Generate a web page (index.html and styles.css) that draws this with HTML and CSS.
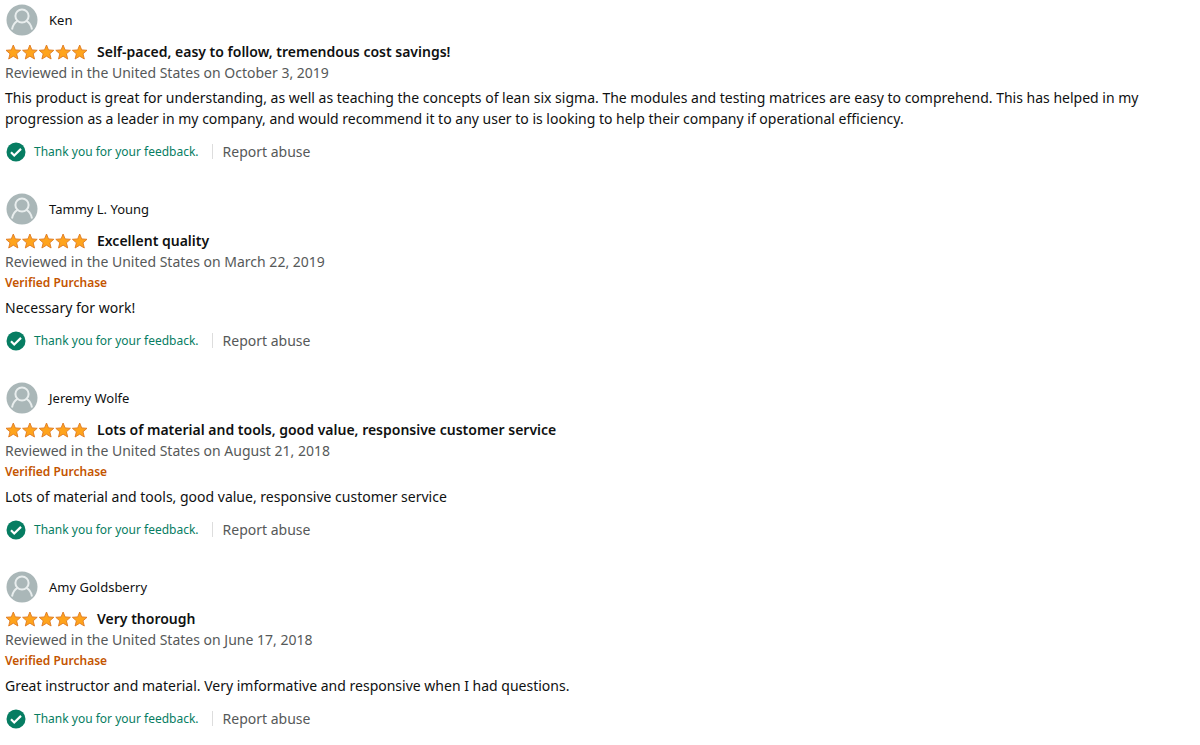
FILE: index.html
```
<!DOCTYPE html>
<html lang="en">
<head>
  <meta charset="UTF-8">
  <title>Customer Reviews</title>
  <link rel="stylesheet" href="styles.css">
</head>
<body>

  <!-- Shared icons -->
  <svg class="icon-defs" aria-hidden="true">
    <symbol id="avatar" viewBox="0 0 32 32">
      <circle cx="16" cy="16" r="15.5" fill="#aab7b8"/>
      <g fill="none" stroke="#e9eeee" stroke-width="2">
        <circle cx="16" cy="12" r="6.6"/>
        <path d="M6 25.500c.8-4.600 2.600-7.300 5.700-8.700M26 25.500c-.8-4.600-2.600-7.300-5.700-8.700"/>
      </g>
    </symbol>
    <symbol id="stars" viewBox="0 0 84 16">
      <g fill="#ffa41c" stroke="#de7921" stroke-width="0.9" stroke-linejoin="round">
        <path id="star" d="M8.300 1l2 4.900 5.300.4-4 3.500 1.300 5.200-4.600-2.800-4.600 2.800L5 9.800 1 6.300l5.300-.4z"/>
        <use href="#star" x="16.600"/>
        <use href="#star" x="33.200"/>
        <use href="#star" x="49.800"/>
        <use href="#star" x="66.400"/>
      </g>
    </symbol>
    <symbol id="check" viewBox="0 0 20 20">
      <circle cx="10" cy="10" r="9.500" fill="#067d62"/>
      <path d="M5 10.300l3.200 3.200 6.800-6.600" fill="none" stroke="#fff" stroke-width="2.200"/>
    </symbol>
  </svg>

  <div class="review">
    <div class="profile">
      <svg class="avatar" aria-hidden="true"><use href="#avatar"/></svg>
      <span class="name">Ken</span>
    </div>
    <div class="heading">
      <svg class="stars" role="img" aria-label="5 out of 5 stars"><use href="#stars"/></svg>
      <h3 class="title">Self-paced, easy to follow, tremendous cost savings!</h3>
    </div>
    <div class="date">Reviewed in the United States on October 3, 2019</div>
    <p class="text">This product is great for understanding, as well as teaching the concepts of lean six sigma. The modules and testing matrices are easy to comprehend. This has helped in my progression as a leader in my company, and would recommend it to any user to is looking to help their company if operational efficiency.</p>
    <div class="actions">
      <svg class="check" aria-hidden="true"><use href="#check"/></svg>
      <span class="thanks">Thank you for your feedback.</span>
      <a class="report" href="#">Report abuse</a>
    </div>
  </div>

  <div class="review">
    <div class="profile">
      <svg class="avatar" aria-hidden="true"><use href="#avatar"/></svg>
      <span class="name">Tammy L. Young</span>
    </div>
    <div class="heading">
      <svg class="stars" role="img" aria-label="5 out of 5 stars"><use href="#stars"/></svg>
      <h3 class="title">Excellent quality</h3>
    </div>
    <div class="date">Reviewed in the United States on March 22, 2019</div>
    <div class="verified">Verified Purchase</div>
    <p class="text">Necessary for work!</p>
    <div class="actions">
      <svg class="check" aria-hidden="true"><use href="#check"/></svg>
      <span class="thanks">Thank you for your feedback.</span>
      <a class="report" href="#">Report abuse</a>
    </div>
  </div>

  <div class="review">
    <div class="profile">
      <svg class="avatar" aria-hidden="true"><use href="#avatar"/></svg>
      <span class="name">Jeremy Wolfe</span>
    </div>
    <div class="heading">
      <svg class="stars" role="img" aria-label="5 out of 5 stars"><use href="#stars"/></svg>
      <h3 class="title">Lots of material and tools, good value, responsive customer service</h3>
    </div>
    <div class="date">Reviewed in the United States on August 21, 2018</div>
    <div class="verified">Verified Purchase</div>
    <p class="text">Lots of material and tools, good value, responsive customer service</p>
    <div class="actions">
      <svg class="check" aria-hidden="true"><use href="#check"/></svg>
      <span class="thanks">Thank you for your feedback.</span>
      <a class="report" href="#">Report abuse</a>
    </div>
  </div>

  <div class="review">
    <div class="profile">
      <svg class="avatar" aria-hidden="true"><use href="#avatar"/></svg>
      <span class="name">Amy Goldsberry</span>
    </div>
    <div class="heading">
      <svg class="stars" role="img" aria-label="5 out of 5 stars"><use href="#stars"/></svg>
      <h3 class="title">Very thorough</h3>
    </div>
    <div class="date">Reviewed in the United States on June 17, 2018</div>
    <div class="verified">Verified Purchase</div>
    <p class="text">Great instructor and material. Very imformative and responsive when I had questions.</p>
    <div class="actions">
      <svg class="check" aria-hidden="true"><use href="#check"/></svg>
      <span class="thanks">Thank you for your feedback.</span>
      <a class="report" href="#">Report abuse</a>
    </div>
  </div>

</body>
</html>
```

FILE: styles.css
```
body {
  margin: 0;
  padding: 4px 60px 0 5px;
  background: #fff;
  color: #0f1111;
  font-family: "Noto Sans", "Open Sans", sans-serif;
  font-size: 14px;
  line-height: 21px;
}

.icon-defs {
  display: none;
}

.review {
  margin-bottom: 31px;
}

.review:last-child {
  margin-bottom: 0;
}

.profile {
  display: flex;
  align-items: center;
  gap: 11px;
  padding-left: 1px;
  margin-bottom: 5px;
}

.avatar {
  width: 32px;
  height: 32px;
}

.name {
  font-size: 13px;
}

.heading {
  display: flex;
  align-items: center;
  gap: 8px;
}

.stars {
  width: 84px;
  height: 16px;
}

.title {
  margin: 0;
  font-size: 14px;
  font-weight: 600;
}

.date {
  color: #565959;
}

.verified {
  padding-top: 1px;
  color: #c45500;
  font-size: 12px;
  font-weight: 600;
  line-height: 20px;
}

.text {
  margin: 4px 0 12px;
}

.actions {
  display: flex;
  align-items: center;
}

.check {
  width: 20px;
  height: 20px;
  margin: 0 8px 0 1px;
}

.thanks {
  color: #067d62;
  font-size: 12px;
}

.report {
  margin-left: 13px;
  padding: 1px 0 0 10px;
  border-left: 1px solid #ddd;
  color: #565959;
  line-height: 14px;
  text-decoration: none;
}

.report:hover {
  text-decoration: underline;
}
```
